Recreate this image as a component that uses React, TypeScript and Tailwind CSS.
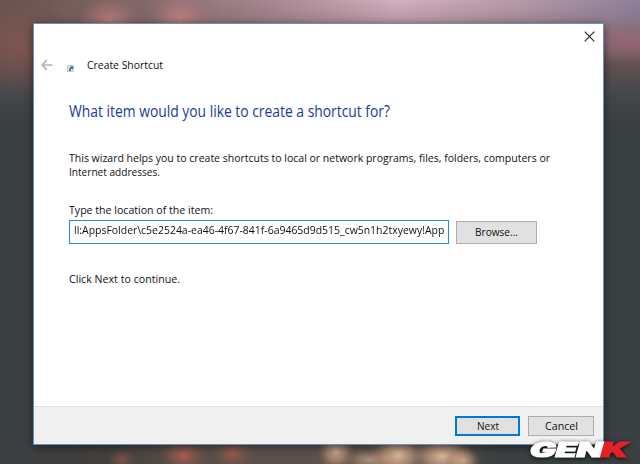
import type { ReactNode } from "react";

function Line({ children, width, className = "" }: { children: ReactNode; width: number; className?: string }) {
  return (
    <svg className={`block h-4 shrink-0 overflow-visible ${className}`} width={width} height="16">
      <text x="0" y="12" textLength={width} lengthAdjust="spacingAndGlyphs" fill="currentColor">
        {children}
      </text>
    </svg>
  );
}

export default function App() {
  return (
    <div className="relative flex h-[464px] w-[640px] overflow-hidden bg-[#3b4043] font-['Open_Sans','Noto_Sans',sans-serif] text-[11.5px] text-[#111]">
      <svg className="absolute inset-0" width="640" height="464">
        <defs>
          <linearGradient id="sky" x1="0" x2="1" y1="0" y2="0">
            <stop offset="0" stopColor="#69554f" />
            <stop offset=".2" stopColor="#7f6564" />
            <stop offset=".42" stopColor="#a78791" />
            <stop offset=".62" stopColor="#d3afbf" />
            <stop offset=".8" stopColor="#b79baa" />
            <stop offset="1" stopColor="#8e809b" />
          </linearGradient>
          <linearGradient id="dusk" x1="0" x2="0" y1="0" y2="1">
            <stop offset="0" stopColor="#74575a" stopOpacity="0" />
            <stop offset=".3" stopColor="#7c585c" stopOpacity=".45" />
            <stop offset=".5" stopColor="#64504f" stopOpacity=".95" />
            <stop offset=".75" stopColor="#47484b" />
            <stop offset="1" stopColor="#3b4043" />
          </linearGradient>
          <linearGradient id="ground" x1="0" x2="1" y1="0" y2="0">
            <stop offset="0" stopColor="#3b4043" />
            <stop offset=".16" stopColor="#433f3d" />
            <stop offset=".3" stopColor="#5a4e49" />
            <stop offset=".65" stopColor="#5f544e" />
            <stop offset=".78" stopColor="#3b4041" />
            <stop offset="1" stopColor="#3b4041" />
          </linearGradient>
          <radialGradient id="rose">
            <stop offset="0" stopColor="#c98080" />
            <stop offset=".4" stopColor="#bd7d7c" stopOpacity=".65" />
            <stop offset="1" stopColor="#a87474" stopOpacity="0" />
          </radialGradient>
          <radialGradient id="rust">
            <stop offset="0" stopColor="#83554f" />
            <stop offset=".5" stopColor="#7b524e" stopOpacity=".5" />
            <stop offset="1" stopColor="#5a4a49" stopOpacity="0" />
          </radialGradient>
          <radialGradient id="mauve">
            <stop offset="0" stopColor="#9c6470" />
            <stop offset=".5" stopColor="#936570" stopOpacity=".5" />
            <stop offset="1" stopColor="#7d6270" stopOpacity="0" />
          </radialGradient>
          <radialGradient id="ember">
            <stop offset="0" stopColor="#b8604c" />
            <stop offset=".5" stopColor="#a05d4e" stopOpacity=".5" />
            <stop offset="1" stopColor="#7a564b" stopOpacity="0" />
          </radialGradient>
          <radialGradient id="glow">
            <stop offset="0" stopColor="#ecc4a2" />
            <stop offset=".5" stopColor="#d9a888" stopOpacity=".6" />
            <stop offset="1" stopColor="#94745f" stopOpacity="0" />
          </radialGradient>
        </defs>
        <rect width="640" height="120" fill="url(#sky)" />
        <rect width="640" height="121" fill="url(#dusk)" />
        <ellipse cx="110" cy="20" rx="32" ry="24" fill="url(#rose)" opacity=".75" />
        <ellipse cx="180" cy="18" rx="32" ry="26" fill="url(#rose)" opacity=".8" />
        <ellipse cx="20" cy="46" rx="52" ry="58" fill="url(#rust)" opacity=".75" />
        <ellipse cx="630" cy="42" rx="56" ry="24" fill="url(#mauve)" opacity=".75" />
        <rect y="443" width="640" height="21" fill="url(#ground)" />
        <ellipse cx="122" cy="460" rx="15" ry="12" fill="url(#ember)" opacity=".5" />
        <ellipse cx="183" cy="455" rx="24" ry="18" fill="url(#ember)" opacity=".9" />
        <ellipse cx="233" cy="453" rx="22" ry="17" fill="url(#ember)" opacity=".7" />
        <ellipse cx="336" cy="452" rx="19" ry="20" fill="url(#glow)" opacity=".75" />
        <ellipse cx="370" cy="460" rx="28" ry="12" fill="url(#glow)" opacity=".55" />
        <ellipse cx="398" cy="455" rx="28" ry="24" fill="url(#glow)" opacity=".9" />
        <ellipse cx="442" cy="456" rx="32" ry="22" fill="url(#glow)" opacity=".9" />
        <ellipse cx="463" cy="461" rx="18" ry="15" fill="url(#glow)" opacity=".7" />
      </svg>

      <main className="relative mt-[23px] ml-[33px] flex h-[422px] w-[571px] flex-col border border-[#6990b9] bg-white shadow-[0_2px_9px_rgba(0,0,0,0.5)]">
        <div className="flex h-[25px] shrink-0 justify-end pt-[7px] pr-[8px]">
          <svg width="11" height="11" viewBox="0 0 11 11" fill="none" stroke="#222" strokeWidth="1.1">
            <path d="M.7.7 10.3 10.3M10.3.7.7 10.3" />
          </svg>
        </div>
        <header className="flex h-8 shrink-0 items-center pl-[7px]">
          <svg width="12" height="12" viewBox="0 0 12 12" fill="none" stroke="#b4b4b4" strokeWidth="1.7">
            <path d="M11.5 6H1.2M5.7 1.2 1.2 6l4.5 4.8" />
          </svg>
          <svg className="mt-[7px] ml-[14px]" width="7" height="7" viewBox="0 0 7 7">
            <path d="M.5.5h6v6h-6z" fill="#dfe7ef" stroke="#c3c6ca" />
            <path d="M2 6C1.8 4 2.6 3 3.6 2.8L3 1.4h3v3l-1-.8C4 4 3.5 4.6 3.6 6z" fill="#2460aa" />
          </svg>
          <Line width={76} className="ml-[13px]">Create Shortcut</Line>
        </header>
        <section className="flex grow flex-col items-start pt-[21px] pl-[35px]">
          <svg className="h-5 shrink-0 overflow-visible text-[15.5px]" width="321" height="20">
            <text x="0" y="15" textLength="321" lengthAdjust="spacingAndGlyphs" fill="#173ba0">What item would you like to create a shortcut for?</text>
          </svg>
          <Line width={481} className="mt-[28px]">This wizard helps you to create shortcuts to local or network programs, files, folders, computers or</Line>
          <Line width={91} className="-mt-[2px]">Internet addresses.</Line>
          <Line width={144} className="mt-[22px]">Type the location of the item:</Line>
          <div className="mt-[2px] flex items-center gap-[7px]">
            <div className="flex h-6 w-[380px] items-start border border-[#258ada] pt-px pl-1">
              <span className="block w-[370px] origin-left scale-x-[0.909] leading-4 whitespace-nowrap">
                ll:AppsFolder\c5e2524a-ea46-4f67-841f-6a9465d9d515_cw5n1h2txyewy!App
              </span>
            </div>
            <button className="flex h-[23px] w-[81px] items-center justify-center border border-[#adadad] bg-[#e1e1e1]">
              <Line width={43}>Browse...</Line>
            </button>
          </div>
          <Line width={111} className="mt-[27px]">Click Next to continue.</Line>
        </section>
        <footer className="flex h-[38px] shrink-0 items-center justify-end gap-2 border-t border-[#dfdfdf] bg-[#f0f0f0] pr-[9px]">
          <button className="flex h-5 w-[65px] items-center justify-center border-2 border-[#0078d7] bg-[#e1e1e1]">
            <Line width={22}>Next</Line>
          </button>
          <button className="flex h-5 w-[66px] items-center justify-center border border-[#adadad] bg-[#e1e1e1]">
            <Line width={33}>Cancel</Line>
          </button>
        </footer>
      </main>
      <svg className="absolute top-[436px] left-[524px] overflow-visible font-['Inter',sans-serif] text-[19.5px] font-black italic drop-shadow-[0_1px_2px_rgba(0,0,0,0.8)]" width="112" height="28">
        <text x="6" y="20.5" textLength="73" lengthAdjust="spacingAndGlyphs" fill="#fff" stroke="#fff" strokeWidth="1.2">GEN</text>
        <text x="77" y="20.5" textLength="27" lengthAdjust="spacingAndGlyphs" fill="#e42127" stroke="#e42127" strokeWidth="1.2">K</text>
      </svg>
    </div>
  );
}
